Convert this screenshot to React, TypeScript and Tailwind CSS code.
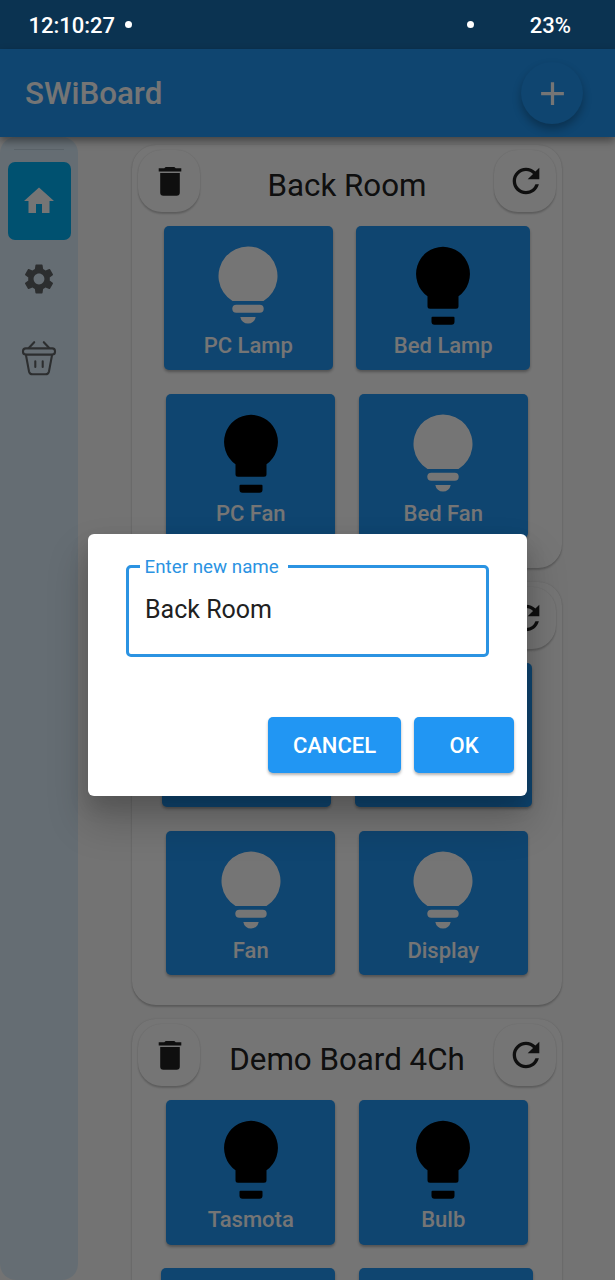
import React from "react";
import { MdAdd, MdHome, MdRefresh, MdSettings } from "react-icons/md";

type Device = { name?: string; on: boolean; width: string };
type Board = { title?: string; rows: Device[][] };

const boards: Board[] = [
  {
    title: "Back Room",
    rows: [
      [
        { name: "PC Lamp", on: false, width: "w-[169px]" },
        { name: "Bed Lamp", on: true, width: "w-[174px]" },
      ],
      [
        { name: "PC Fan", on: true, width: "w-[169px]" },
        { name: "Bed Fan", on: false, width: "w-[169px]" },
      ],
    ],
  },
  {
    rows: [
      [
        { on: false, width: "w-[169px]" },
        { on: false, width: "w-[177px]" },
      ],
      [
        { name: "Fan", on: false, width: "w-[169px]" },
        { name: "Display", on: false, width: "w-[169px]" },
      ],
    ],
  },
  {
    title: "Demo Board 4Ch",
    rows: [
      [
        { name: "Tasmota", on: true, width: "w-[169px]" },
        { name: "Bulb", on: true, width: "w-[169px]" },
      ],
      [
        { on: false, width: "w-[174px]" },
        { on: false, width: "w-[174px]" },
      ],
    ],
  },
];

function Bulb({ on }: { on: boolean }) {
  return (
    <svg viewBox="0 0 60 80" className={`h-20 w-[60px] shrink-0 ${on ? "text-black" : "text-white"}`} fill="currentColor">
      {on ? (
        <>
          <path d="M30 .7a27.3 27.3 0 0 1 15.5 49.5V60.3a2.5 2.5 0 0 1-2.5 2.5H17a2.5 2.5 0 0 1-2.5-2.5V50.2A27.3 27.3 0 0 1 30 .7Z" />
          <path d="M19.5 70.8h21a1 1 0 0 1 1 1v4a3 3 0 0 1-3 3h-17a3 3 0 0 1-3-3v-4a1 1 0 0 1 1-1Z" />
        </>
      ) : (
        <>
          <path d="M14.5 55.1a29.5 29.5 0 1 1 31 0Z" />
          <rect x="14.3" y="58.8" width="31.4" height="8" rx="4" />
          <path d="M22.3 71h15.4a7.8 7.8 0 0 1-15.4 0Z" />
        </>
      )}
    </svg>
  );
}

function Trash() {
  return (
    <svg viewBox="0 0 24 30" className="h-[30px] w-6" fill="currentColor">
      <path d="M.7 2.3h5.6l1-1.1a1 1 0 0 1 .7-.3h8a1 1 0 0 1 .7.3l1 1.1h5.6v3.1H.7ZM2.2 7h19.6v19.5a3.2 3.2 0 0 1-3.2 3.2H5.4a3.2 3.2 0 0 1-3.2-3.2Z" />
    </svg>
  );
}

function Basket() {
  return (
    <svg viewBox="0 0 36 36" className="h-9 w-9" fill="none" stroke="currentColor" strokeWidth="2.1" strokeLinecap="round" strokeLinejoin="round">
      <path d="M13.2 2.2 7.8 8M22.8 2.2 28.2 8" />
      <rect x="2" y="8.4" width="32" height="6.2" rx="2.8" />
      <path d="M4.9 14.8 8 31.4a3.6 3.6 0 0 0 3.5 2.8h13a3.6 3.6 0 0 0 3.5-2.8l3.1-16.6M14.3 21.3v5.6M21.7 21.3v5.6" />
    </svg>
  );
}

function RoundButton({ children }: { children: React.ReactNode }) {
  return (
    <button className="flex h-[62px] w-[62px] items-center justify-center rounded-[24px] bg-white text-[#212121] shadow-[0_1.5px_2px_rgba(0,0,0,0.2),0_0_2px_rgba(0,0,0,0.07)]">
      {children}
    </button>
  );
}

function BoardCard({ board }: { board: Board }) {
  return (
    <section className="h-[423.5px] shrink-0 rounded-[24px] bg-white pt-[5.5px] shadow-[0_1.5px_2px_rgba(0,0,0,0.2),0_0_2px_rgba(0,0,0,0.1)]">
      <header className="flex items-start justify-between px-[6px]">
        <RoundButton>
          <span className="pl-[2px]">
            <Trash />
          </span>
        </RoundButton>
        <h2 className="pt-4 text-[31.3px] leading-10 font-normal text-[#212121]">{board.title}</h2>
        <RoundButton>
          <MdRefresh className="ml-px h-[40px] w-[40px]" />
        </RoundButton>
      </header>
      <div className="flex flex-col gap-[23.5px] pt-[13.8px]">
        {board.rows.map((row, i) => (
          <div key={i} className="flex justify-center gap-[23.5px]">
            {row.map((d, j) => (
              <button
                key={j}
                className={`${d.width} flex h-[144.5px] flex-col items-center rounded-[5px] bg-[#2196f3] pt-5 text-[22px] font-medium text-white shadow-[0_2px_3px_rgba(0,0,0,0.3)]`}
              >
                <Bulb on={d.on} />
                {d.name && <span className="mt-[6px] leading-7">{d.name}</span>}
              </button>
            ))}
          </div>
        ))}
      </div>
    </section>
  );
}

export default function App() {
  return (
    <div className="relative flex h-[1280px] w-[615px] flex-col overflow-hidden bg-[#fafafa] font-[Roboto,sans-serif]">
      <div className="h-[49px] shrink-0 bg-[#196fb0]" />
      <header className="z-10 flex h-[88px] shrink-0 items-center justify-between bg-[#2196f3] pr-8 pl-[25px] text-white shadow-[0_4px_8px_rgba(0,0,0,0.4)]">
        <h1 className="pt-[3px] text-[31.3px] font-medium">SWiBoard</h1>
        <button className="flex h-[62px] w-[62px] items-center justify-center rounded-full bg-[#2196f3] shadow-[0_5px_9px_rgba(0,0,0,0.28)]">
          <MdAdd className="h-[39px] w-[39px]" />
        </button>
      </header>
      <div className="flex min-h-0 flex-1">
        <nav className="flex w-[78px] flex-col items-center rounded-[16px] bg-[#dceefb] pt-[12px] text-[#616467]">
          <div className="h-px w-[50px] bg-[#c6d7e4]" />
          <button className="mt-[12px] flex h-[78px] w-[63px] items-center justify-center rounded-[7px] bg-[#00b0f5] text-white">
            <MdHome className="h-9 w-9" />
          </button>
          <button className="flex h-[78px] items-center">
            <MdSettings className="h-9 w-9" />
          </button>
          <button className="flex h-[79px] items-center">
            <Basket />
          </button>
        </nav>
        <main className="ml-[54px] flex w-[430px] flex-col gap-[13.7px] pt-[7.5px]">
          {boards.map((b, i) => (
            <BoardCard key={i} board={b} />
          ))}
        </main>
      </div>

      <div className="absolute inset-0 z-20 flex items-start justify-center bg-black/54">
        <div role="dialog" className="mt-[533.5px] flex h-[262px] w-[439px] flex-col rounded-[6px] bg-white px-[13px] pt-[31.5px] shadow-[0_24px_38px_4px_rgba(0,0,0,0.18),0_10px_20px_rgba(0,0,0,0.12)]">
          <fieldset className="relative mx-[25px] h-[92px] rounded-[5px] border-[3px] border-[#2b93e2] pl-4">
            <span className="absolute -top-[13.5px] left-[11px] bg-white pr-[9px] pl-[4.5px] text-[18.8px] leading-6 text-[#2b93e2]">Enter new name</span>
            <input className="mt-[22px] w-full text-[25px] leading-10 text-[#212121] outline-none" defaultValue="Back Room" />
          </fieldset>
          <div className="mt-[60px] flex justify-end gap-[13px] text-[22px] font-medium text-white">
            <button className="h-14 w-[133px] rounded-[5px] bg-[#2196f3] shadow-[0_2px_3px_rgba(0,0,0,0.3)]">CANCEL</button>
            <button className="h-14 w-[100px] rounded-[5px] bg-[#2196f3] shadow-[0_2px_3px_rgba(0,0,0,0.3)]">OK</button>
          </div>
        </div>
      </div>

      <div className="absolute inset-x-0 top-0 z-30 flex h-[49px] items-center pt-px pr-[44px] pl-[28.5px] text-[22px] font-medium text-white">
        <span>12:10:27</span>
        <span className="mb-px ml-[9.5px] h-[7px] w-[7px] rounded-full bg-white" />
        <span className="mr-[56px] mb-px ml-auto h-[7px] w-[7px] rounded-full bg-white" />
        <span>23%</span>
      </div>
    </div>
  );
}
